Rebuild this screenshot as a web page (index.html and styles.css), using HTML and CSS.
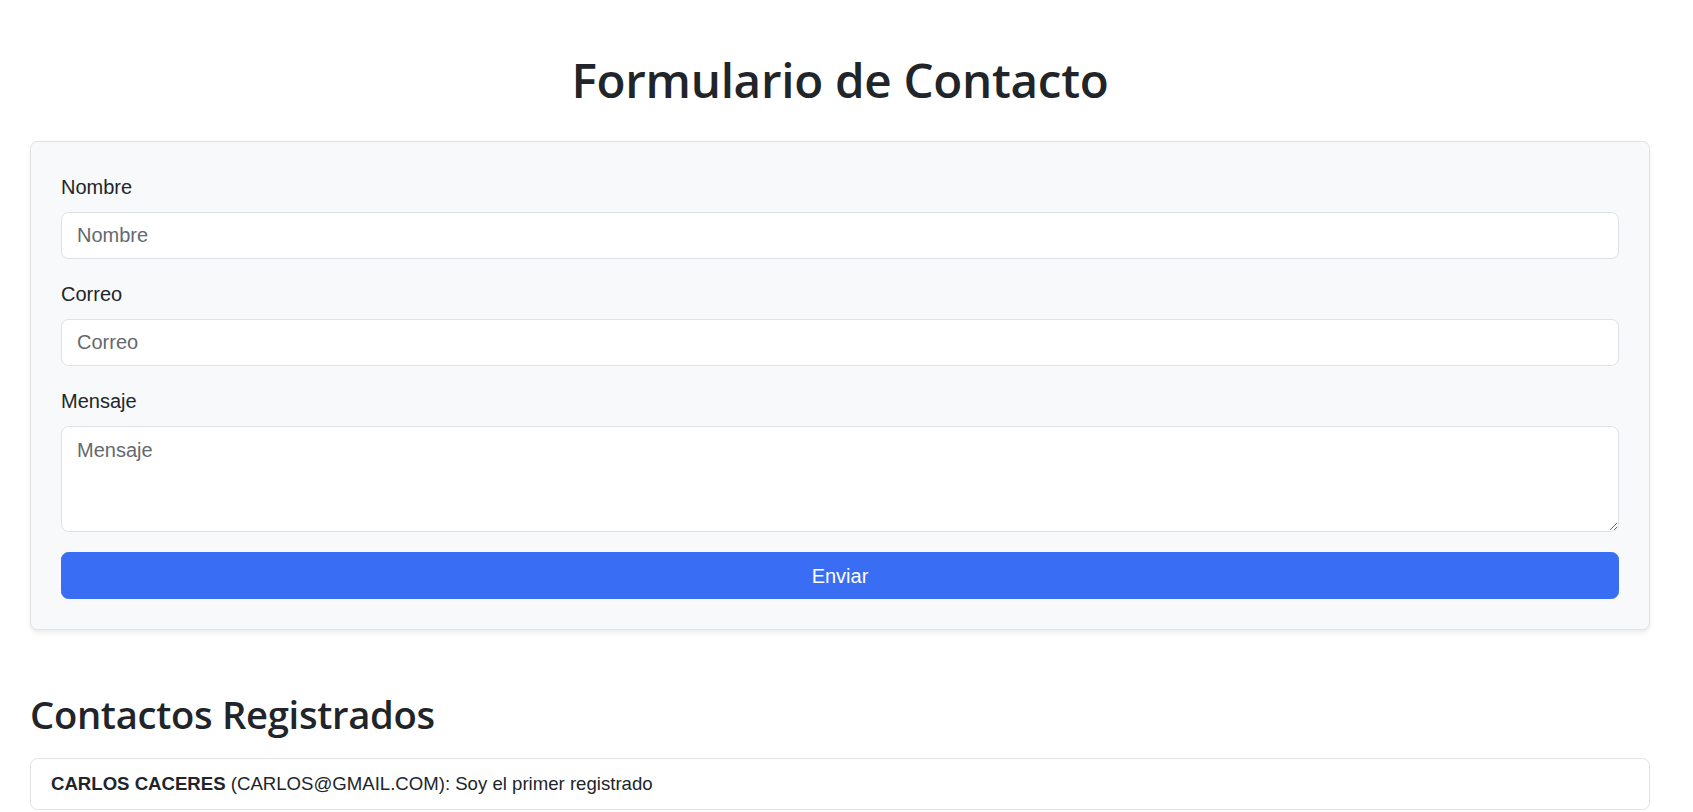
FILE: index.html
```html
<!DOCTYPE html>
<html lang="es">
<head>
<meta charset="utf-8">
<title>Formulario de Contacto</title>
<link rel="stylesheet" href="styles.css">
</head>
<body>
<div class="page">
  <h1 class="title">Formulario de Contacto</h1>
  <form class="card">
    <div class="field">
      <label class="label" for="nombre">Nombre</label>
      <input class="control" id="nombre" type="text" placeholder="Nombre">
    </div>
    <div class="field">
      <label class="label" for="correo">Correo</label>
      <input class="control" id="correo" type="email" placeholder="Correo">
    </div>
    <div class="field">
      <label class="label" for="mensaje">Mensaje</label>
      <textarea class="control area" id="mensaje" rows="3" placeholder="Mensaje"></textarea>
    </div>
    <button class="btn" type="button">Enviar</button>
  </form>

  <h2 class="subtitle">Contactos Registrados</h2>
  <ul class="list">
    <li class="item"><strong>CARLOS CACERES</strong> (CARLOS@GMAIL.COM): Soy el primer registrado</li>
  </ul>
</div>
</body>
</html>
```
FILE: styles.css
```css
* { box-sizing: border-box; }

html, body {
  margin: 0;
  padding: 0;
  background: #fff;
}

body {
  font-family: "Liberation Sans", Arial, sans-serif;
  font-size: 20px;
  line-height: 30px;
  color: #212529;
}

.page {
  width: 1620px;
  margin-left: 30px;
  padding-top: 50px;
  padding-bottom: 40px;
}

.title {
  font-family: "Open Sans", "Liberation Sans", sans-serif;
  font-weight: 600;
  font-size: 47.6px;
  line-height: 60px;
  text-align: center;
  margin: 0 0 31px 0;
  letter-spacing: -0.3px;
}

.card {
  display: block;
  background: #f8f9fa;
  border: 1px solid #e0e2e5;
  border-radius: 7.5px;
  padding: 30px;
  box-shadow: 0 2.5px 5px rgba(0, 0, 0, 0.075);
}

.field {
  margin-bottom: 20px;
}

.label {
  display: block;
  margin-bottom: 10px;
  line-height: 30px;
}

.control {
  display: block;
  width: 100%;
  height: 47px;
  padding: 7.5px 15px;
  font-family: inherit;
  font-size: 20px;
  line-height: 30px;
  color: #212529;
  background: #fff;
  border: 1px solid #dee2e6;
  border-radius: 7.5px;
  outline: none;
}

.control::placeholder {
  color: #65696d;
  opacity: 1;
}

.area {
  height: 106px;
  resize: vertical;
}

.btn {
  display: block;
  width: 100%;
  height: 47px;
  padding: 7.5px 15px;
  font-family: inherit;
  font-size: 20px;
  line-height: 30px;
  color: #fff;
  background: #386df4;
  border: 1px solid #386df4;
  border-radius: 7.5px;
  cursor: pointer;
}

.subtitle {
  font-family: "Open Sans", "Liberation Sans", sans-serif;
  font-weight: 600;
  font-size: 38.2px;
  line-height: 48px;
  margin: 60px 0 20px 0;
  letter-spacing: -0.3px;
}

.list {
  list-style: none;
  margin: 0;
  padding: 0;
  border: 1px solid #e0e2e5;
  border-radius: 7.5px;
  background: #fff;
}

.item {
  padding: 10px 20px;
  line-height: 30px;
  font-size: 18.6px;
}
```
